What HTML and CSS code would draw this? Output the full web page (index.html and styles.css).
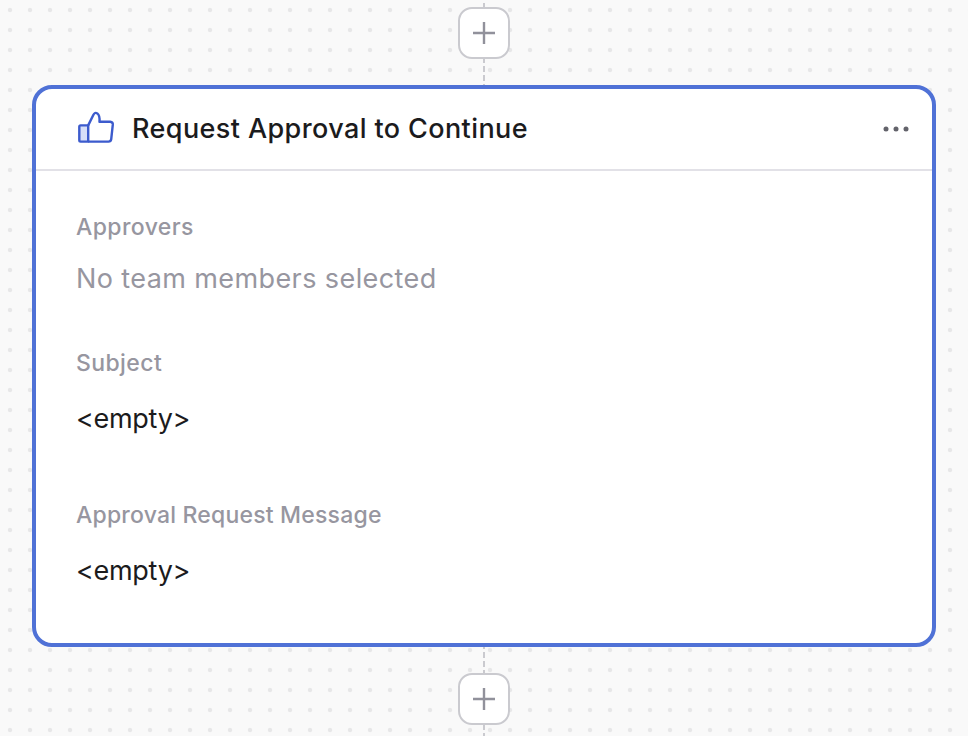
FILE: index.html
```html
<!DOCTYPE html>
<html lang="en">
<head>
  <meta charset="UTF-8">
  <meta name="viewport" content="width=device-width, initial-scale=1.0">
  <title>Request Approval to Continue</title>
  <link rel="stylesheet" href="styles.css">
</head>
<body>
  <div class="canvas">
    <div class="connector connector-top">
      <button class="add-step" aria-label="Add step">
        <svg width="24" height="24" viewBox="0 0 24 24"><path d="M12 1v22M1 12h22"/></svg>
      </button>
    </div>

    <div class="card">
      <div class="card-header">
        <svg class="thumb" width="38" height="34" viewBox="0 0 38 34">
          <path class="thumb-cuff" d="M3.6 14.4h7.6v16.2H3.6q-1.3 0-1.3-1.3V15.7q0-1.3 1.3-1.3z"/>
          <path d="M11.2 14.4L16.3 4Q17.9.8 20.3 2.4Q23 4.4 22.5 10.8H33.2Q36 11.1 35.8 13.7L34.2 28.3Q33.8 30.6 31.5 30.6H11.2"/>
        </svg>
        <h1 class="card-title">Request Approval to Continue</h1>
        <button class="menu" aria-label="More">
          <svg width="26" height="6" viewBox="0 0 26 6">
            <circle cx="3" cy="3" r="2.5"/>
            <circle cx="13" cy="3" r="2.5"/>
            <circle cx="23" cy="3" r="2.5"/>
          </svg>
        </button>
      </div>
      <div class="card-body">
        <div class="field approvers">
          <p class="label">Approvers</p>
          <p class="value placeholder">No team members selected</p>
        </div>
        <div class="field subject">
          <p class="label">Subject</p>
          <p class="value">&lt;empty&gt;</p>
        </div>
        <div class="field message">
          <p class="label">Approval Request Message</p>
          <p class="value">&lt;empty&gt;</p>
        </div>
      </div>
    </div>

    <div class="connector connector-bottom">
      <button class="add-step" aria-label="Add step">
        <svg width="24" height="24" viewBox="0 0 24 24"><path d="M12 1v22M1 12h22"/></svg>
      </button>
    </div>
  </div>
</body>
</html>
```

FILE: styles.css
```css
* {
  box-sizing: border-box;
}
body {
  margin: 0;
  font-family: Inter, "Liberation Sans", sans-serif;
  color: #1b1b1d;
}
.canvas {
  display: flex;
  flex-direction: column;
  align-items: center;
  height: 736px;
  overflow: hidden;
  background-color: #f9f9f9;
  background-image: radial-gradient(circle, #e7e7e8 1.8px, transparent 2.6px);
  background-size: 20px 20px;
}

/* Dashed line with the add button on it */
.connector {
  display: flex;
  justify-content: center;
  width: 52px;
  background: repeating-linear-gradient(to bottom, #cacacf 0 6px, transparent 6px 9px) center 0 / 2px 108px no-repeat;
}
.connector-top {
  height: 85px;
  padding-top: 7px;
  background-position: center 3px;
}
.connector-bottom {
  height: 89px;
  padding-top: 26px;
  background-position: center -4px;
}
.add-step {
  display: flex;
  align-items: center;
  justify-content: center;
  width: 52px;
  height: 52px;
  padding: 0;
  background: #fff;
  border: 2px solid #cacacf;
  border-radius: 14px;
}
.add-step path {
  fill: none;
  stroke: #91919b;
  stroke-width: 2.4;
}

.card {
  width: 904px;
  height: 562px;
  background: #fff;
  border: 4px solid #4f71d6;
  border-radius: 20px;
}
.card-header {
  display: flex;
  align-items: center;
  height: 82px;
  padding: 0 23px 0 41px;
  border-bottom: 2px solid #e2e1e7;
}
.thumb {
  margin-bottom: 2px;
}
.thumb path {
  fill: none;
  stroke: #3c5bcd;
  stroke-width: 2.4;
  stroke-linejoin: round;
}
.thumb .thumb-cuff {
  fill: #d7dff8;
}
.card-title {
  margin: 0 auto 0 17px;
  font-size: 27px;
  font-weight: 500;
  line-height: 36px;
  letter-spacing: 0.4px;
  white-space: nowrap;
}
.menu {
  display: flex;
  padding: 0;
  background: none;
  border: none;
}
.menu circle {
  fill: #63636b;
}

.card-body {
  padding: 40px;
}
.field p {
  margin: 0;
  white-space: nowrap;
}
.field .label {
  font-size: 23px;
  font-weight: 500;
  line-height: 32px;
  letter-spacing: 0.2px;
  color: #9796a0;
}
.approvers .label,
.subject .label {
  letter-spacing: 0.4px;
}
.field .value {
  margin-top: 22px;
  font-size: 27px;
  line-height: 36px;
  letter-spacing: -0.3px;
}
.approvers .value {
  margin-top: 18px;
}
.field .placeholder {
  color: #9796a0;
  letter-spacing: 0.4px;
}
.subject {
  margin-top: 50px;
}
.message {
  margin-top: 62px;
}
```
